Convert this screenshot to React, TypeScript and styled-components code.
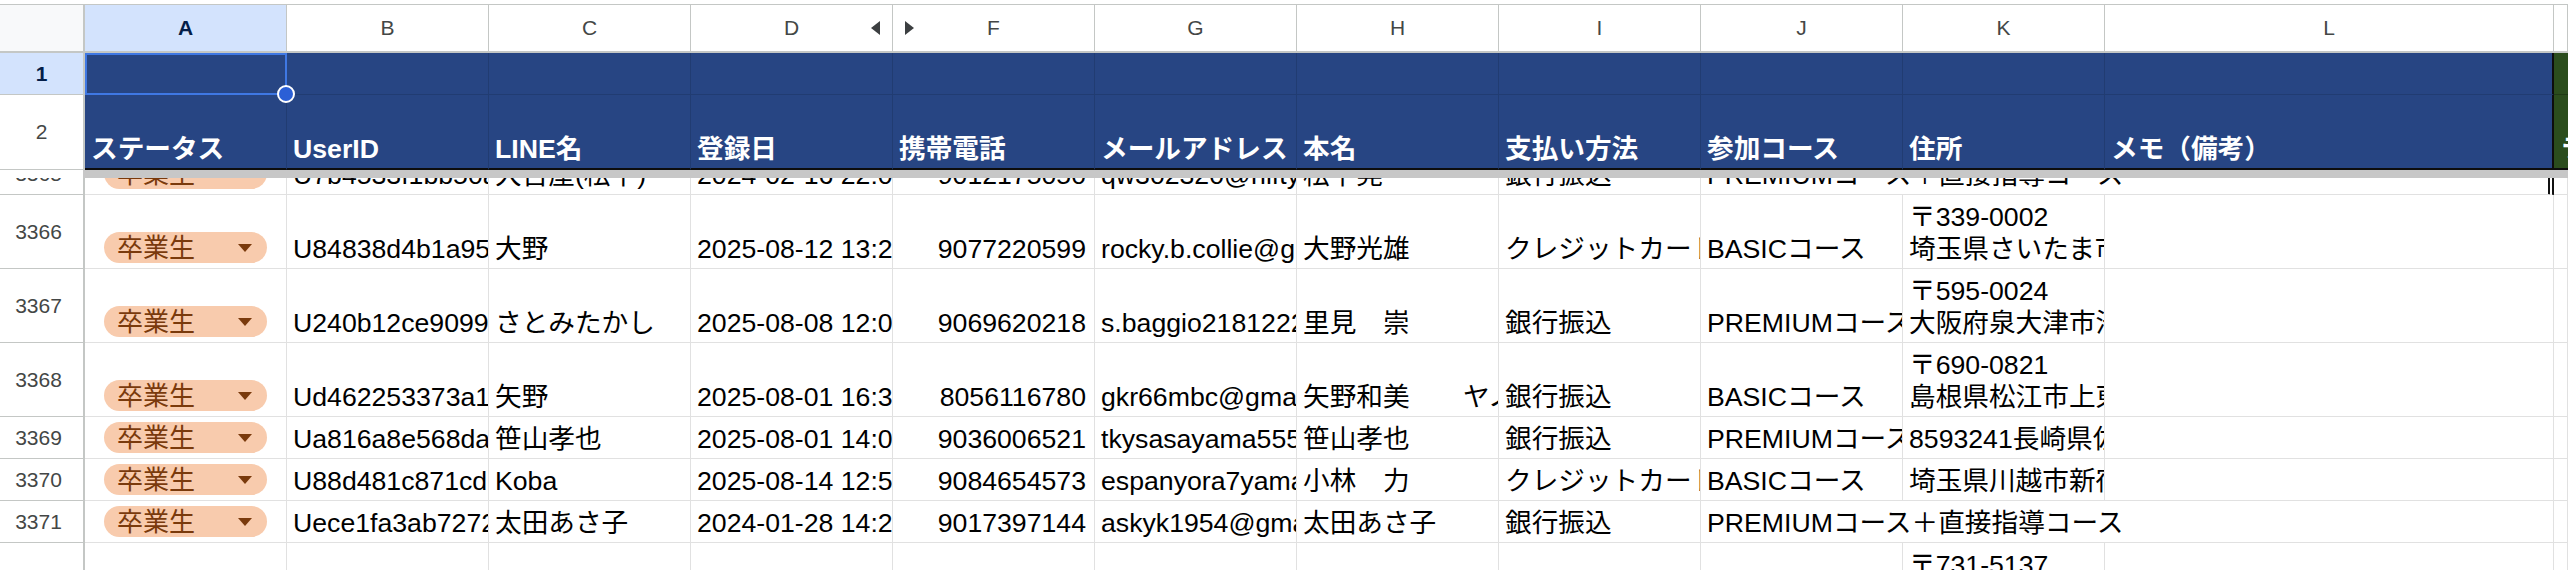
import React from "react";
import styled, { createGlobalStyle } from "styled-components";

const GRID = "85px repeat(10, 202px) 449px 1fr";
const FONT = `"Liberation Sans", Arial, "Noto Sans CJK JP", sans-serif`;

const GlobalStyle = createGlobalStyle`
  html, body {
    margin: 0;
    padding: 0;
    background: #fff;
  }
  body {
    font-family: ${FONT};
  }
  * {
    box-sizing: border-box;
  }
`;

type Row = {
    n: number;
    h: number;
    id: string;
    line: string;
    date: string;
    tel: string;
    mail: string;
    name: string;
    pay: string;
    course: string;
    addr: string;
    edge?: boolean;
};

const columns = ["A", "B", "C", "D", "F", "G", "H", "I", "J", "K", "L", ""];

const labels = [
    "ステータス",
    "UserID",
    "LINE名",
    "登録日",
    "携帯電話",
    "メールアドレス",
    "本名",
    "支払い方法",
    "参加コース",
    "住所",
    "メモ（備考）",
];

const rows: Row[] = [
    {
        n: 3365,
        h: 42,
        id: "U7b4533f1bb50a",
        line: "大吉屋(松下)",
        date: "2024-02-16 22:05",
        tel: "9012175050",
        mail: "qw302320@nifty.com",
        name: "松下晃",
        pay: "銀行振込",
        course: "PREMIUMコース＋直接指導コース",
        addr: "",
        edge: true,
    },
    {
        n: 3366,
        h: 74,
        id: "U84838d4b1a95c",
        line: "大野",
        date: "2025-08-12 13:24",
        tel: "9077220599",
        mail: "rocky.b.collie@gmail.com",
        name: "大野光雄",
        pay: "クレジットカード",
        course: "BASICコース",
        addr: "〒339-0002\n埼玉県さいたま市岩槻区",
    },
    {
        n: 3367,
        h: 74,
        id: "U240b12ce9099f",
        line: "さとみたかし",
        date: "2025-08-08 12:03",
        tel: "9069620218",
        mail: "s.baggio2181222@gmail.com",
        name: "里見　崇",
        pay: "銀行振込",
        course: "PREMIUMコース",
        addr: "〒595-0024\n大阪府泉大津市池浦町",
    },
    {
        n: 3368,
        h: 74,
        id: "Ud462253373a1b",
        line: "矢野",
        date: "2025-08-01 16:32",
        tel: "8056116780",
        mail: "gkr66mbc@gmail.com",
        name: "矢野和美　　ヤノカズミ",
        pay: "銀行振込",
        course: "BASICコース",
        addr: "〒690-0821\n島根県松江市上東川津町",
    },
    {
        n: 3369,
        h: 42,
        id: "Ua816a8e568da3",
        line: "笹山孝也",
        date: "2025-08-01 14:06",
        tel: "9036006521",
        mail: "tkysasayama555@gmail.com",
        name: "笹山孝也",
        pay: "銀行振込",
        course: "PREMIUMコース",
        addr: "8593241長崎県佐世保市",
    },
    {
        n: 3370,
        h: 42,
        id: "U88d481c871cd2",
        line: "Koba",
        date: "2025-08-14 12:51",
        tel: "9084654573",
        mail: "espanyora7yama@gmail.com",
        name: "小林　力",
        pay: "クレジットカード",
        course: "BASICコース",
        addr: "埼玉県川越市新宿町",
    },
    {
        n: 3371,
        h: 42,
        id: "Uece1fa3ab7272",
        line: "太田あさ子",
        date: "2024-01-28 14:22",
        tel: "9017397144",
        mail: "askyk1954@gmail.com",
        name: "太田あさ子",
        pay: "銀行振込",
        course: "PREMIUMコース＋直接指導コース",
        addr: "",
    },
    {
        n: 3372,
        h: 74,
        id: "U5c21e0d7a9b14",
        line: "ひろし",
        date: "2024-01-20 09:15",
        tel: "9011223344",
        mail: "hiroshi@gmail.com",
        name: "山本浩",
        pay: "銀行振込",
        course: "BASICコース",
        addr: "〒731-5137\n広島県広島市佐伯区",
    },
];

const Caret = () => (
    <svg width="14" height="8" viewBox="0 0 14 8">
        <polygon points="0,0 14,0 7,8" fill="#7a3a0c" />
    </svg>
);

const Arrow: React.FC<{ dir: "left" | "right" }> = ({ dir }) => (
    <svg width="9" height="14" viewBox="0 0 9 14">
        <polygon
            points={dir === "left" ? "9,0 9,14 0,7" : "0,0 0,14 9,7"}
            fill="#3c3f41"
        />
    </svg>
);

const App: React.FC = () => {
    return (
        <>
            <GlobalStyle />
            <Sheet>
                <ColumnHeaderRow>
                    <Corner />
                    {columns.map((c, i) => (
                        <ColHead key={i} $active={c === "A"}>
                            {c}
                            {c === "D" && (
                                <HiddenMark $side="right">
                                    <Arrow dir="left" />
                                </HiddenMark>
                            )}
                            {c === "F" && (
                                <HiddenMark $side="left">
                                    <Arrow dir="right" />
                                </HiddenMark>
                            )}
                        </ColHead>
                    ))}
                </ColumnHeaderRow>

                <FrozenRow $h={42} $top>
                    <RowHead $active>1</RowHead>
                    {labels.map((_, i) => (
                        <HeadCell key={i} $last={i === labels.length - 1}>
                            {i === 0 && (
                                <Selection>
                                    <Handle />
                                </Selection>
                            )}
                        </HeadCell>
                    ))}
                    <GreenCell />
                </FrozenRow>

                <FrozenRow $h={75}>
                    <RowHead>2</RowHead>
                    {labels.map((l, i) => (
                        <HeadCell
                            key={i}
                            $bottom
                            $last={i === labels.length - 1}
                        >
                            {l}
                        </HeadCell>
                    ))}
                    <GreenCell $bottom>ラベル</GreenCell>
                </FrozenRow>

                <FreezeBar />

                <Body>
                    <Rows>
                        {rows.map((r) => {
                            const overflow = r.addr === "";
                            return (
                                <DataRow key={r.n} $h={r.h}>
                                    <RowNum>{r.n}</RowNum>
                                    <Cell>
                                        <Chip>
                                            卒業生
                                            <Caret />
                                        </Chip>
                                    </Cell>
                                    <Cell>{r.id}</Cell>
                                    <Cell>{r.line}</Cell>
                                    <Cell>{r.date}</Cell>
                                    <Cell $right>{r.tel}</Cell>
                                    <Cell>{r.mail}</Cell>
                                    <Cell>{r.name}</Cell>
                                    <Cell>{r.pay}</Cell>
                                    <Cell
                                        $span={overflow ? 3 : 1}
                                        $edge={overflow && r.edge}
                                    >
                                        {r.course}
                                    </Cell>
                                    {!overflow && <Cell $wrap>{r.addr}</Cell>}
                                    {!overflow && <Cell />}
                                    <Cell />
                                </DataRow>
                            );
                        })}
                    </Rows>
                </Body>
            </Sheet>
        </>
    );
};

const Sheet = styled.div`
    width: 2568px;
    height: 570px;
    padding-top: 4px;
    display: flex;
    flex-direction: column;
    overflow: hidden;
    background: #fff;
`;

const ColumnHeaderRow = styled.div`
    display: grid;
    grid-template-columns: ${GRID};
    height: 49px;
    flex: none;
    border-top: 1px solid #c4c7c5;
    border-bottom: 2px solid #c4c7c5;
`;

const Corner = styled.div`
    background: #f8f9fa;
    border-right: 2px solid #c4c7c5;
`;

const ColHead = styled.div<{ $active?: boolean }>`
    position: relative;
    display: flex;
    align-items: center;
    justify-content: center;
    border-right: 1px solid #c4c7c5;
    background: ${(p) => (p.$active ? "#d3e3fd" : "#fff")};
    color: ${(p) => (p.$active ? "#041e49" : "#444746")};
    font-weight: ${(p) => (p.$active ? 700 : 400)};
    font-size: 21px;
`;

const HiddenMark = styled.span<{ $side: "left" | "right" }>`
    position: absolute;
    top: 50%;
    ${(p) => p.$side}: 12px;
    transform: translateY(-50%);
    display: flex;
`;

const FrozenRow = styled.div<{ $h: number; $top?: boolean }>`
    display: grid;
    grid-template-columns: ${GRID};
    height: ${(p) => p.$h}px;
    flex: none;
    position: relative;
    z-index: ${(p) => (p.$top ? 2 : 1)};
`;

const RowHead = styled.div<{ $active?: boolean }>`
    display: flex;
    align-items: center;
    justify-content: center;
    background: ${(p) => (p.$active ? "#d3e3fd" : "#fff")};
    color: ${(p) => (p.$active ? "#041e49" : "#444746")};
    font-weight: ${(p) => (p.$active ? 700 : 400)};
    font-size: 21px;
    border-right: 2px solid #c4c7c5;
    border-bottom: 1px solid #c4c7c5;
`;

const HeadCell = styled.div<{ $last?: boolean; $bottom?: boolean }>`
    position: relative;
    display: flex;
    align-items: flex-end;
    padding: 0 6px 3px;
    background: #274583;
    border-right: ${(p) =>
        p.$last ? "2px solid #0d0d0d" : "1px solid #213c72"};
    border-bottom: ${(p) =>
        p.$bottom ? "2px solid #0d0d0d" : "1px solid #213c72"};
    color: #fff;
    font-weight: 700;
    font-size: 26.67px;
    line-height: 32px;
    white-space: nowrap;
    overflow: visible;
`;

const GreenCell = styled.div<{ $bottom?: boolean }>`
    display: flex;
    align-items: flex-end;
    padding: 0 6px 3px;
    background: #2b4d1d;
    border-bottom: ${(p) =>
        p.$bottom ? "2px solid #0d0d0d" : "1px solid #203a15"};
    color: #fff;
    font-weight: 700;
    font-size: 26.67px;
    line-height: 32px;
    white-space: nowrap;
    overflow: hidden;
`;

const Selection = styled.div`
    position: absolute;
    z-index: 3;
    inset: 0 -1px -1px 0;
    border: 2px solid #3f78e4;
    pointer-events: none;
`;

const Handle = styled.div`
    position: absolute;
    right: -10px;
    bottom: -10px;
    width: 18px;
    height: 18px;
    border-radius: 50%;
    background: #2b5fd6;
    border: 2px solid #fff;
`;

const FreezeBar = styled.div`
    flex: none;
    height: 8px;
    margin-left: 83px;
    background: #c7c7c7;
`;

const Body = styled.div`
    flex: 1;
    overflow: hidden;
`;

const Rows = styled.div`
    margin-top: -25px;
`;

const DataRow = styled.div<{ $h: number }>`
    display: grid;
    grid-template-columns: ${GRID};
    height: ${(p) => p.$h}px;
`;

const RowNum = styled.div`
    display: flex;
    align-items: center;
    justify-content: center;
    padding-right: 6px;
    color: #444746;
    font-size: 21px;
    border-right: 2px solid #c4c7c5;
    border-bottom: 1px solid #c4c7c5;
`;

const Cell = styled.div<{
    $right?: boolean;
    $span?: number;
    $wrap?: boolean;
    $edge?: boolean;
}>`
    grid-column: span ${(p) => p.$span ?? 1};
    min-width: 0;
    display: flex;
    flex-direction: column;
    justify-content: flex-end;
    align-items: ${(p) => (p.$right ? "flex-end" : "flex-start")};
    padding: 0 ${(p) => (p.$right ? 8 : 6)}px 3px 6px;
    border-right: ${(p) =>
        p.$edge ? "6px double #111" : "1px solid #e1e1e1"};
    border-bottom: 1px solid #e1e1e1;
    color: #000;
    font-size: 26.67px;
    line-height: 32px;
    white-space: ${(p) => (p.$wrap ? "pre" : "nowrap")};
    overflow: hidden;
`;

const Chip = styled.div`
    flex: none;
    display: flex;
    align-items: center;
    justify-content: space-between;
    width: 163px;
    height: 31px;
    margin: 0 0 2px 13px;
    padding: 0 15px 0 13px;
    border-radius: 16px;
    background: #f8cbad;
    color: #7a3a0c;
    font-size: 26px;
    line-height: 1;
`;

export default App;
